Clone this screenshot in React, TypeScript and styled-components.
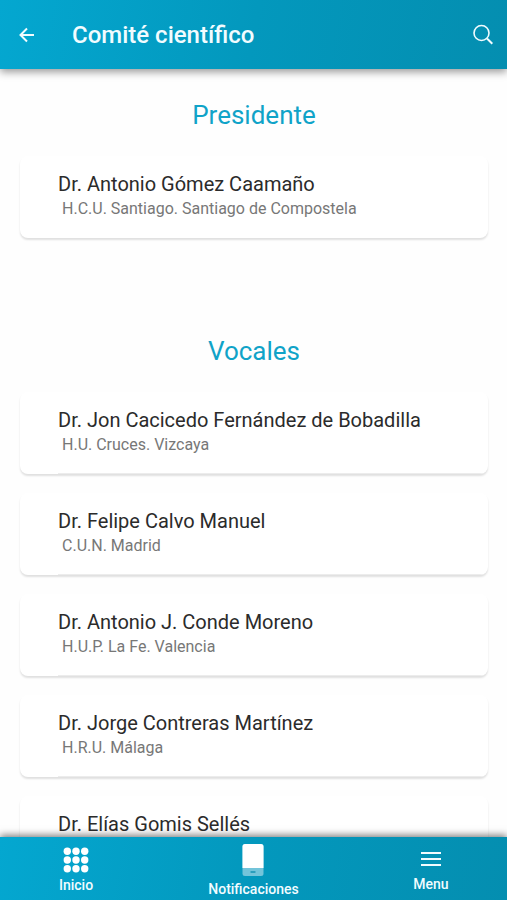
import React from "react";
import styled, { createGlobalStyle } from "styled-components";

const GlobalStyle = createGlobalStyle`
  * { box-sizing: border-box; }
  body {
    margin: 0;
    background: #fefefe;
    color: #2b2b2b;
    font-family: Roboto, "Liberation Sans", sans-serif;
  }
`;

const Screen = styled.div`
  display: flex;
  flex-direction: column;
  height: 100vh;
`;

const barGradient = "linear-gradient(100deg, #04a7d0 0%, #0398bd 50%, #048eb0 100%)";

const TopBar = styled.header`
  position: relative;
  z-index: 1;
  flex: none;
  display: flex;
  align-items: center;
  height: 69px;
  padding: 0 12px 0 16px;
  background: ${barGradient};
  box-shadow: 0 3px 8px rgba(0, 0, 0, 0.4);
  color: #f2fcff;
`;

const IconButton = styled.button`
  display: flex;
  padding: 0;
  border: 0;
  background: none;
  color: inherit;
  cursor: pointer;
`;

const Title = styled.h1`
  flex: 1;
  margin: 0 0 0 34px;
  font-size: 24px;
  line-height: 32px;
  font-weight: 500;
`;

const Content = styled.main`
  flex: 1;
  min-height: 0;
  padding: 30px 19px 24px 20px;
  overflow-y: auto;
  scrollbar-width: none;
`;

const Section = styled.section`
  & + & { margin-top: 97px; }
`;

const SectionTitle = styled.h2`
  margin: 0 0 25px;
  color: #10a3c8;
  font-size: 26px;
  line-height: 32px;
  font-weight: 400;
  text-align: center;
`;

const Members = styled.ul`
  display: flex;
  flex-direction: column;
  gap: 19px;
  margin: 0;
  padding: 0;
  list-style: none;
`;

const Card = styled.li<{ $divided: boolean }>`
  padding: 15px 0 0 38px;
  border-radius: 8px;
  background: #fff;
  box-shadow: 0 2px 2px rgba(0, 0, 0, 0.12);
  overflow: hidden;

  > div {
    padding-bottom: 16px;
    border-bottom: 1px solid ${({ $divided }) => ($divided ? "#ececec" : "transparent")};
  }
`;

const Name = styled.h3`
  margin: 0;
  font-size: 20px;
  line-height: 26px;
  font-weight: 400;
`;

const Center = styled.p`
  min-height: 24px;
  margin: 0;
  padding-left: 4px;
  color: #777;
  font-size: 16px;
  line-height: 24px;
`;

const BottomBar = styled.nav`
  position: relative;
  z-index: 1;
  flex: none;
  display: grid;
  grid-template-columns: 30% 40% 30%;
  height: 63px;
  background: ${barGradient};
  box-shadow: 0 -2px 7px rgba(0, 0, 0, 0.5);
`;

const Tab = styled.a`
  display: flex;
  flex-direction: column;
  align-items: center;
  justify-content: center;
  gap: 3px;
  padding-top: 4px;
  color: #f2fcff;
  font-size: 14px;
  line-height: 18px;
  font-weight: 500;
  text-decoration: none;
`;

const BackIcon = () => (
  <svg width="22" height="22" viewBox="0 0 22 22" fill="none" stroke="currentColor" strokeWidth="2" aria-hidden="true">
    <path d="M18 11H4.5M11 4.5 4.5 11l6.500 6.500" />
  </svg>
);

const SearchIcon = () => (
  <svg width="24" height="24" viewBox="0 0 24 24" fill="none" stroke="currentColor" strokeWidth="1.600" aria-hidden="true">
    <circle cx="10.500" cy="10" r="7.500" />
    <path d="m16 15.500 5.300 5.300" strokeWidth="2" />
  </svg>
);

const GridIcon = () => (
  <svg width="26" height="26" viewBox="0 0 26 26" fill="#fff" aria-hidden="true">
    {[4.3, 13, 21.7].map((y) => [4.3, 13, 21.7].map((x) => <circle key={`${x}-${y}`} cx={x} cy={y} r="3.700" />))}
  </svg>
);

const PhoneIcon = () => (
  <svg width="22" height="34" viewBox="0 0 22 34" aria-hidden="true">
    <rect x="0.500" y="1" width="21" height="32" rx="2.500" fill="#73c4da" />
    <path d="M3 1h16a2.500 2.500 0 0 1 2.500 2.500V25H.5V3.500A2.500 2.500 0 0 1 3 1Z" fill="#fff" />
    <rect x="8.500" y="28" width="5" height="2" rx="0.500" fill="#2b9fbd" />
  </svg>
);

const MenuIcon = () => (
  <svg width="22" height="24" viewBox="0 0 22 24" stroke="currentColor" strokeWidth="2" aria-hidden="true">
    <path d="M1 5h20M1 11h20M1 17h20" />
  </svg>
);

const committee = [
  {
    title: "Presidente",
    divided: false,
    members: [{ name: "Dr. Antonio Gómez Caamaño", center: "H.C.U. Santiago. Santiago de Compostela" }],
  },
  {
    title: "Vocales",
    divided: true,
    members: [
      { name: "Dr. Jon Cacicedo Fernández de Bobadilla", center: "H.U. Cruces. Vizcaya" },
      { name: "Dr. Felipe Calvo Manuel", center: "C.U.N. Madrid" },
      { name: "Dr. Antonio J. Conde Moreno", center: "H.U.P. La Fe. Valencia" },
      { name: "Dr. Jorge Contreras Martínez", center: "H.R.U. Málaga" },
      { name: "Dr. Elías Gomis Sellés", center: "" },
    ],
  },
];

export default function App() {
  return (
    <Screen>
      <GlobalStyle />
      <TopBar>
        <IconButton type="button" aria-label="Volver"><BackIcon /></IconButton>
        <Title>Comité científico</Title>
        <IconButton type="button" aria-label="Buscar"><SearchIcon /></IconButton>
      </TopBar>
      <Content>
        {committee.map((group) => (
          <Section key={group.title}>
            <SectionTitle>{group.title}</SectionTitle>
            <Members>
              {group.members.map((member) => (
                <Card key={member.name} $divided={group.divided}>
                  <div>
                    <Name>{member.name}</Name>
                    <Center>{member.center}</Center>
                  </div>
                </Card>
              ))}
            </Members>
          </Section>
        ))}
      </Content>
      <BottomBar>
        <Tab href="#inicio"><GridIcon />Inicio</Tab>
        <Tab href="#notificaciones"><PhoneIcon />Notificaciones</Tab>
        <Tab href="#menu"><MenuIcon />Menu</Tab>
      </BottomBar>
    </Screen>
  );
}
